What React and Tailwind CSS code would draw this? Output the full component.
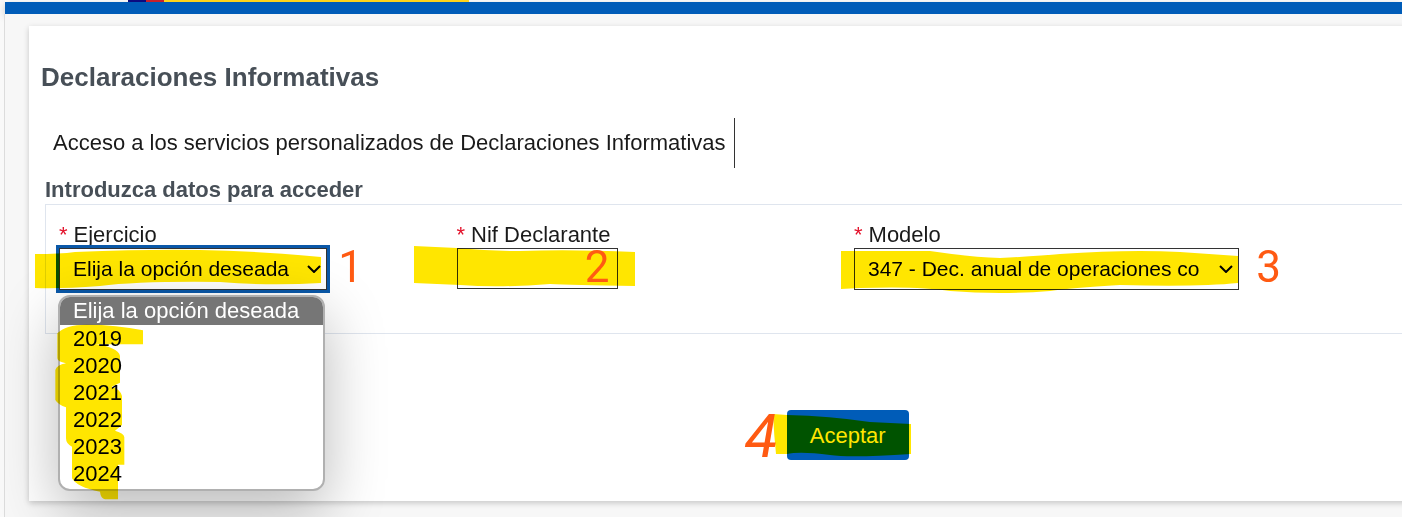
import { useState } from "react";

const years = ["2019", "2020", "2021", "2022", "2023", "2024"];
const placeholder = "Elija la opción deseada";

function Label({ htmlFor, children }) {
  return (
    <label htmlFor={htmlFor} className="block h-[30px] leading-[34px]">
      <span className="mr-[6px] text-[#e3122b]">*</span>
      {children}
    </label>
  );
}

function Chevron() {
  return (
    <svg
      className="pointer-events-none absolute right-[6px] top-[17px] h-2 w-[14px]"
      viewBox="0 0 14 8"
      fill="none"
      stroke="#000"
      strokeWidth="2"
    >
      <path d="M1 1l6 6 6-6" />
    </svg>
  );
}

// highlighter stroke laid over a control
function Marker({ className, viewBox, d }) {
  return (
    <svg
      className={`pointer-events-none absolute mix-blend-multiply ${className}`}
      viewBox={viewBox}
      fill="#ffe600"
      aria-hidden="true"
    >
      <path d={d} />
    </svg>
  );
}

// step number in orange ink
function Step({ className, children }) {
  return (
    <span
      className={`pointer-events-none absolute font-['Roboto',sans-serif] text-[#ff5a12] ${className}`}
    >
      {children}
    </span>
  );
}

export default function App() {
  const [year, setYear] = useState(placeholder);
  const [nif, setNif] = useState("");

  return (
    <div className="min-h-screen overflow-hidden bg-[#f9f9f9] pl-1 font-['Liberation_Sans',Arial,sans-serif] text-[22px] text-[#1a1a1a]">
      <div className="ml-px flex h-[2px] bg-white pl-[123px]">
        <span className="w-[18px] bg-[#0b0b80]" />
        <span className="w-[18px] bg-[#c8202c]" />
        <span className="w-[305px] bg-[#ffd31a]" />
      </div>
      <header className="ml-px h-3 bg-[#005cb8] shadow-[0_2px_8px_rgba(0,0,0,0.2)]" />

      <div className="min-h-[503px] border-l border-[#dcdcdc] bg-[#f7f7f7] pl-6 pt-3">
        <main className="-mr-2 bg-white pb-[41px] pl-3 pr-2 pt-8 shadow-[0_2px_6px_rgba(0,0,0,0.2)]">
          <h1 className="text-[26px] font-bold leading-[38px] text-[#474f57]">
            Declaraciones Informativas
          </h1>

          <p className="mt-[22px] inline-block border-r border-[#333333] pl-3 pr-2 leading-[50px]">
            Acceso a los servicios personalizados de Declaraciones Informativas
          </p>

          <form className="mt-2" onSubmit={(e) => e.preventDefault()}>
            <fieldset className="ml-1">
              <legend className="font-bold leading-[28px] text-[#474f57]">
                Introduzca datos para acceder
              </legend>

              <div className="grid h-[130px] grid-cols-[3fr_3fr_4fr] border-y border-l border-[#dfe5ee] pl-[13px] pr-[18px] pt-[13px]">
                <div>
                  <Label htmlFor="ejercicio">Ejercicio</Label>
                  <div className="relative w-[268px]">
                    <select
                      id="ejercicio"
                      value={year}
                      onChange={(e) => setYear(e.target.value)}
                      className="h-[42px] w-full appearance-none border border-[#333333] bg-white pl-[13px] text-[21px] text-black outline-3 outline-[#0a58a8]"
                    >
                      <option>{placeholder}</option>
                      {years.map((y) => (
                        <option key={y}>{y}</option>
                      ))}
                    </select>
                    <Chevron />

                    <ul
                      role="listbox"
                      aria-label="Ejercicio"
                      className="absolute -left-px top-[47px] w-[267px] overflow-hidden rounded-xl border-2 border-[#b0b0b0] bg-white pb-[2px] leading-[27px] text-black shadow-[0_20px_60px_rgba(0,0,0,0.28)]"
                    >
                      <li
                        role="option"
                        aria-selected="true"
                        className="bg-[#767676] pb-px pl-[13px] text-white"
                      >
                        {placeholder}
                      </li>
                      {years.map((y) => (
                        <li
                          key={y}
                          role="option"
                          aria-selected="false"
                          onClick={() => setYear(y)}
                          className="cursor-default pl-[13px]"
                        >
                          {y}
                        </li>
                      ))}
                    </ul>

                    <Marker
                      className="-left-6 top-0 h-[42px] w-[292px]"
                      viewBox="35 248 292 42"
                      d="M35 254Q60 254 75 252Q150 249 200 250Q260 251 321 257V283Q270 286 220 282Q140 281 100 286Q60 289 35 288Z"
                    />
                    <Marker
                      className="-left-[6px] top-[75px] h-[180px] w-[100px]"
                      viewBox="39 99 300 540"
                      d="M52 130Q75 104 140 104Q230 104 309 121V163H165Q235 172 240 198V278L215 290Q240 296 246 318V405L225 422Q253 430 253 442V524H234V628H195Q182 625 180 605Q110 592 96 565V470Q78 462 78 445V352Q55 345 46 330V240Q50 225 78 220Q52 215 52 205Z"
                    />
                    <Step className="-right-9 top-0 text-[44px] leading-[38px]">
                      1
                    </Step>
                  </div>
                </div>

                <div>
                  <Label htmlFor="nif">Nif Declarante</Label>
                  <div className="relative w-[161px]">
                    <input
                      id="nif"
                      type="text"
                      value={nif}
                      onChange={(e) => setNif(e.target.value)}
                      className="block h-[41px] w-full border border-[#333333] bg-white px-3 text-black outline-none"
                    />
                    <Marker
                      className="-left-[43px] -top-[2px] h-11 w-[222px]"
                      viewBox="414 246 222 44"
                      d="M414 246L457 248Q490 251 520 251Q570 249 635 252V286Q570 285 550 284Q500 288 460 285L414 283Z"
                    />
                    <Step className="right-2 top-0 text-[44px] leading-[38px]">
                      2
                    </Step>
                  </div>
                </div>

                <div>
                  <Label htmlFor="modelo">Modelo</Label>
                  <div className="relative w-[385px]">
                    <select
                      id="modelo"
                      className="h-[42px] w-full appearance-none border border-[#333333] bg-white pl-[13px] pr-6 text-[21px] text-black outline-none"
                    >
                      <option>347 - Dec. anual de operaciones co</option>
                    </select>
                    <Chevron />
                    <Marker
                      className="-left-[13px] top-0 h-[46px] w-[400px]"
                      viewBox="841 248 400 46"
                      d="M841 251H930Q970 257 1000 258Q1040 256 1060 254Q1130 249 1180 252L1238 256V283Q1200 287 1120 285Q1070 288 1050 291Q1000 295 950 291Q920 286 860 288L841 289Z"
                    />
                    <Step className="-right-[42px] top-0 text-[44px] leading-[38px]">
                      3
                    </Step>
                  </div>
                </div>
              </div>
            </fieldset>

            <div className="mt-[76px] flex pl-[54.8%]">
              <div className="relative">
                <button
                  type="submit"
                  className="block h-[50px] rounded bg-[#005cb8] px-[23px] text-white"
                >
                  Aceptar
                </button>
                <Marker
                  className="-left-[14px] top-0 h-[50px] w-[140px]"
                  viewBox="773 410 140 50"
                  d="M773 414L787 415Q830 416 870 422L911 424V454Q850 458 830 455Q800 451 787 454H776Q774 435 773 414Z"
                />
                <Step className="-left-[42px] top-0 text-[60px] italic leading-[54px]">
                  4
                </Step>
              </div>
            </div>
          </form>
        </main>
      </div>
    </div>
  );
}
